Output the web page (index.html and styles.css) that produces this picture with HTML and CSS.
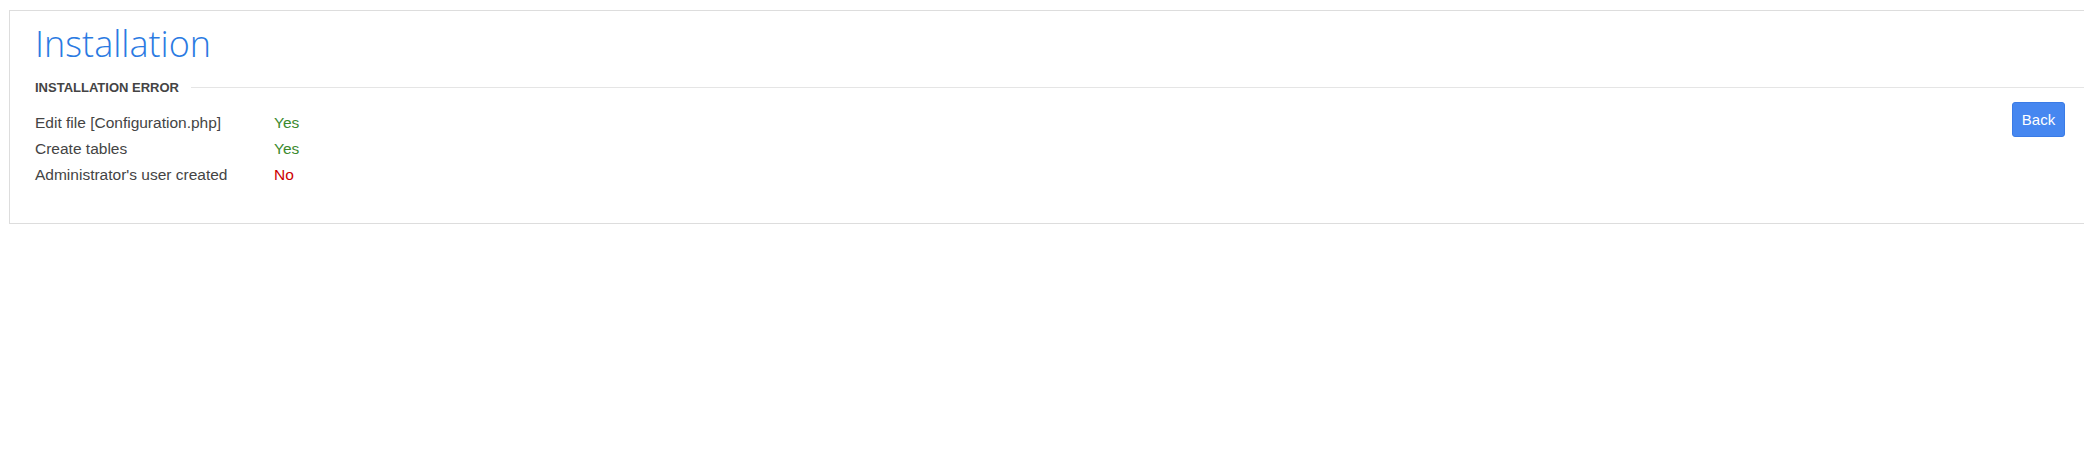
FILE: index.html
```html
<!DOCTYPE html>
<html>
<head>
<meta charset="utf-8">
<link rel="stylesheet" href="styles.css">
</head>
<body>
<div class="panel">
  <h1 class="title">Installation</h1>
  <div class="legend">
    <span class="legend-text">INSTALLATION ERROR</span>
    <span class="legend-line"></span>
  </div>
  <div class="content">
    <table class="status">
      <tr><td class="label">Edit file [Configuration.php]</td><td class="ok">Yes</td></tr>
      <tr><td class="label">Create tables</td><td class="ok">Yes</td></tr>
      <tr><td class="label">Administrator's user created</td><td class="fail">No</td></tr>
    </table>
    <button class="btn">Back</button>
  </div>
</div>
</body>
</html>
```

FILE: styles.css
```css
html, body {
  margin: 0;
  padding: 0;
  overflow: hidden;
  background: #fff;
}
body {
  font-family: "Liberation Sans", Arial, sans-serif;
  color: #444;
}
.panel {
  margin: 10px -40px 0 9px;
  border: 1px solid #ddd;
  padding: 12px 58px 35px 25px;
}
.title {
  margin: 0;
  font-family: "Open Sans", sans-serif;
  font-weight: 300;
  font-size: 36px;
  line-height: 42px;
  color: #2a7ae2;
}
.legend {
  display: flex;
  align-items: center;
  gap: 12px;
  margin-top: 14px;
  margin-right: -58px;
  height: 16px;
}
.legend-text {
  font-size: 13px;
  font-weight: bold;
  color: #444;
  white-space: nowrap;
}
.legend-line {
  flex: 1;
  border-top: 1px solid #e5e5e5;
}
.content {
  display: flex;
  justify-content: space-between;
  align-items: flex-start;
  margin-top: 7px;
}
.status {
  border-collapse: collapse;
  margin-top: 8px;
}
.status td {
  padding: 0;
  height: 26px;
  font-size: 15.5px;
  line-height: 26px;
  vertical-align: middle;
}
.label {
  width: 239px;
  color: #444;
}
.ok { color: #3c8a2e; }
.fail { color: #cc0000; }
.btn {
  font-family: "Liberation Sans", Arial, sans-serif;
  font-size: 15px;
  color: #fff;
  background: #4687f0;
  border: 1px solid #3a7be6;
  border-radius: 3px;
  width: 53px;
  height: 35px;
  padding: 0;
}
```
